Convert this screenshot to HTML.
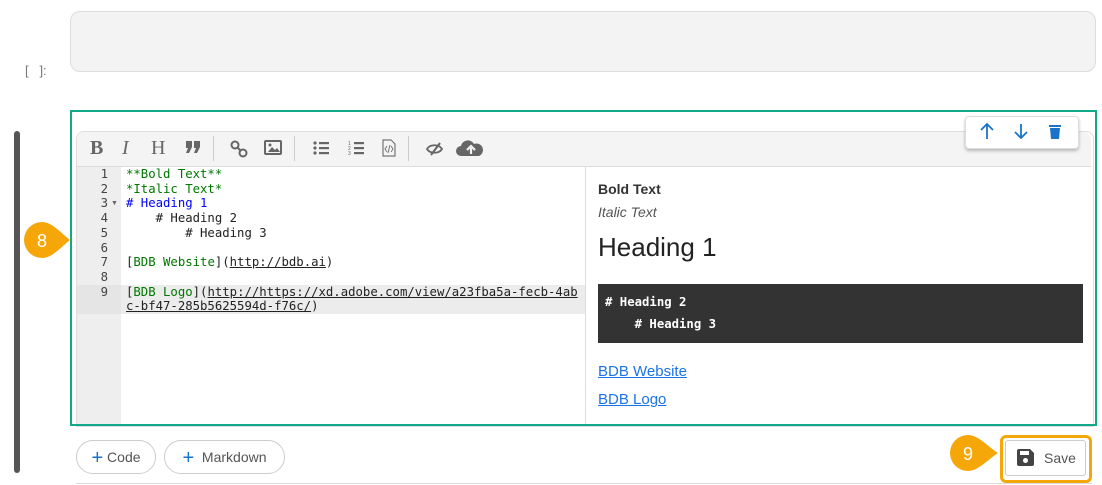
<!DOCTYPE html><html><head><style>
body{margin:0;width:1102px;height:485px;background:#fff;position:relative;overflow:hidden;font-family:"Liberation Sans",sans-serif}
.a{position:absolute}
.code{font-family:"DejaVu Sans Mono","Liberation Mono",monospace;font-size:12.3px;line-height:14.7px;white-space:pre}
.tb span{position:absolute;top:138px;color:#666}
u{text-decoration:underline}
</style></head><body>
<div class="a" style="left:70px;top:11px;width:1024px;height:59px;background:#f3f3f3;border:1px solid #ddd;border-radius:10px"></div>
<div class="a" style="left:25px;top:63px;font-size:13px;color:#777">[&nbsp;&nbsp;&nbsp;]:</div>
<div class="a" style="left:14px;top:131px;width:6px;height:342px;background:#555;border-radius:3px"></div>
<div class="a" style="left:76px;top:131px;width:1016px;height:294px;border:1px solid #ddd;border-radius:8px 8px 0 0;background:#fff"></div>
<div class="a" style="left:77px;top:132px;width:1014px;height:34px;background:#f4f4f4;border-bottom:1px solid #ddd;border-radius:8px 8px 0 0"></div>
<div class="tb">
<span style="left:90px;top:137px;font:bold 20px 'Liberation Serif',serif">B</span>
<span style="left:122px;top:137px;font:italic 20px 'Liberation Serif',serif">I</span>
<span style="left:151px;top:137px;font:20px 'Liberation Serif',serif">H</span>
</div>
<svg class="a" style="left:80px;top:132px" width="420" height="34">
<g fill="#666">
<path d="M106 9h6v6l-3 6h-3l2-5h-2z M114 9h6v6l-3 6h-3l2-5h-2z"/>
</g>
<g fill="none" stroke="#666" stroke-width="2">
<circle cx="155" cy="13" r="3.5"/><circle cx="163" cy="21" r="3.5"/><path d="M157 15l4 4"/>
<rect x="185" y="9" width="16" height="13" rx="1"/>
</g>
<path d="M188 20l4-5 3 3 2-2 3 4z" fill="#666"/><circle cx="190" cy="13" r="1.5" fill="#666"/>
<g fill="#666">
<circle cx="235" cy="11" r="1.6"/><circle cx="235" cy="16" r="1.6"/><circle cx="235" cy="21" r="1.6"/>
<rect x="239" y="10" width="10" height="2.2"/><rect x="239" y="15" width="10" height="2.2"/><rect x="239" y="20" width="10" height="2.2"/>
<rect x="274" y="10" width="10" height="2.2"/><rect x="274" y="15" width="10" height="2.2"/><rect x="274" y="20" width="10" height="2.2"/>
<text x="268" y="13" font-size="5">1</text><text x="268" y="18" font-size="5">2</text><text x="268" y="23" font-size="5">3</text>
</g>
<path d="M303 8h8l4 4v12h-12z" fill="none" stroke="#777" stroke-width="1.2"/>
<path d="M307 14l-2 3 2 3 M311 14l2 3-2 3 M310 13l-2 8" fill="none" stroke="#777" stroke-width="1"/>
<path d="M347 17c3-5 12-5 15 0c-3 5-12 5-15 0z" fill="none" stroke="#666" stroke-width="1.8"/><path d="M351 23l9-12" stroke="#666" stroke-width="2"/>
<path d="M384 24h-3a5 5 0 0 1 0-10a7 7 0 0 1 13-2a6 6 0 0 1 5 12z" fill="#666"/>
<path d="M391 22v-6M387 18l4-4 4 4" stroke="#f4f4f4" stroke-width="2.2" fill="none"/>
</svg>
<div class="a" style="left:213px;top:136px;width:1px;height:25px;background:#ccc"></div>
<div class="a" style="left:294px;top:136px;width:1px;height:25px;background:#ccc"></div>
<div class="a" style="left:408px;top:136px;width:1px;height:25px;background:#ccc"></div>
<div class="a" style="left:77px;top:167px;width:44px;height:257px;background:#eee"></div>
<div class="a" style="left:77px;top:285px;width:508px;height:29px;background:#e5e5e5"></div>
<div class="a" style="left:121px;top:285px;width:464px;height:29px;background:#ececec"></div>
<div class="a" style="left:585px;top:167px;width:1px;height:257px;background:#ddd"></div>
<div class="a code" style="left:96px;top:167px;color:#444;text-align:right;width:12px">1
2
3
4
5
6
7
8
9</div>
<div class="a" style="left:111px;top:200px;font-size:7px;color:#666">▼</div>
<div class="a code" style="left:126px;top:167px;color:#222"><span style="color:#070">**Bold Text**</span>
<span style="color:#070">*Italic Text*</span>
<span style="color:#00f"># Heading 1</span>
    # Heading 2
        # Heading 3

[<span style="color:#070">BDB Website</span>](<u>http://bdb.ai</u>)

[<span style="color:#070">BDB Logo</span>](<u>http://https://xd.adobe.com/view/a23fba5a-fecb-4ab</u>
<u>c-bf47-285b5625594d-f76c/</u>)</div>
<div class="a" style="left:598px;top:181px;font-weight:bold;font-size:14px;color:#333">Bold Text</div>
<div class="a" style="left:598px;top:204px;font-style:italic;font-size:14px;color:#555">Italic Text</div>
<div class="a" style="left:598px;top:232px;font-size:26px;color:#222">Heading 1</div>
<div class="a code" style="left:598px;top:284px;width:485px;height:59px;background:#333;color:#fff;font-weight:bold;padding:7px 0 0 7px;box-sizing:border-box;line-height:22px"># Heading 2
    # Heading 3</div>
<div class="a" style="left:598px;top:363px;font-size:15px;color:#1a73e8;text-decoration:underline">BDB Website</div>
<div class="a" style="left:598px;top:391px;font-size:15px;color:#1a73e8;text-decoration:underline">BDB Logo</div>
<div class="a" style="left:70px;top:110px;width:1023px;height:312px;border:2px solid #12a88a"></div>
<div class="a" style="left:965px;top:116px;width:112px;height:31px;background:#fff;border:1px solid #ddd;border-radius:4px;box-shadow:0 2px 3px rgba(0,0,0,.25)"></div>
<svg class="a" style="left:965px;top:116px" width="112" height="31">
<g stroke="#1a73c8" stroke-width="1.8" fill="none"><path d="M22 23V9M16 14l6-6 6 6"/><path d="M56 8v14M50 16l6 6 6-6"/></g>
<rect x="84" y="9" width="12" height="2" fill="#1a73c8"/><path d="M85 12h10l-1 11h-8z" fill="#1a73c8"/>
</svg>
<svg class="a" style="left:24px;top:222px" width="48" height="36"><path d="M18 0 C28 0 36 10 46 18 C36 26 28 36 18 36 A18 18 0 0 1 18 0Z" fill="#f5a70a"/><text x="18" y="25" fill="#fff" font-size="18" text-anchor="middle" font-family="Liberation Sans">8</text></svg>
<svg class="a" style="left:950px;top:435px" width="52" height="36"><path d="M18 0 C28 0 36 10 48 18 C36 26 28 36 18 36 A18 18 0 0 1 18 0Z" fill="#f5a70a"/><text x="18" y="25" fill="#fff" font-size="18" text-anchor="middle" font-family="Liberation Sans">9</text></svg>
<div class="a" style="left:76px;top:440px;width:78px;height:32px;border:1px solid #ccc;border-radius:17px;font-size:14px;color:#555;line-height:32px;text-align:center"><span style="color:#1a73c8;font-size:20px;vertical-align:-2px">+</span> Code</div>
<div class="a" style="left:164px;top:440px;width:119px;height:32px;border:1px solid #ccc;border-radius:17px;font-size:14px;color:#555;line-height:32px;text-align:center"><span style="color:#1a73c8;font-size:20px;vertical-align:-2px">+</span>&nbsp; Markdown</div>
<div class="a" style="left:1000px;top:435px;width:86px;height:42px;border:3px solid #f5a70a;border-radius:6px"></div>
<div class="a" style="left:1005px;top:440px;width:79px;height:34px;border:1px solid #ccc;border-radius:3px;font-size:14px;color:#555;line-height:34px">
<svg style="position:absolute;left:10px;top:7px" width="19" height="19"><path d="M1 3a2 2 0 0 1 2-2h11l4 4v11a2 2 0 0 1-2 2H3a2 2 0 0 1-2-2z" fill="#444"/><rect x="4" y="3" width="9" height="4" fill="#fff"/><circle cx="9.5" cy="12.5" r="2.5" fill="#fff"/></svg>
<span style="position:absolute;left:38px">Save</span></div>
<div class="a" style="left:76px;top:483px;width:1016px;height:1px;background:#ddd"></div>
</body></html>
